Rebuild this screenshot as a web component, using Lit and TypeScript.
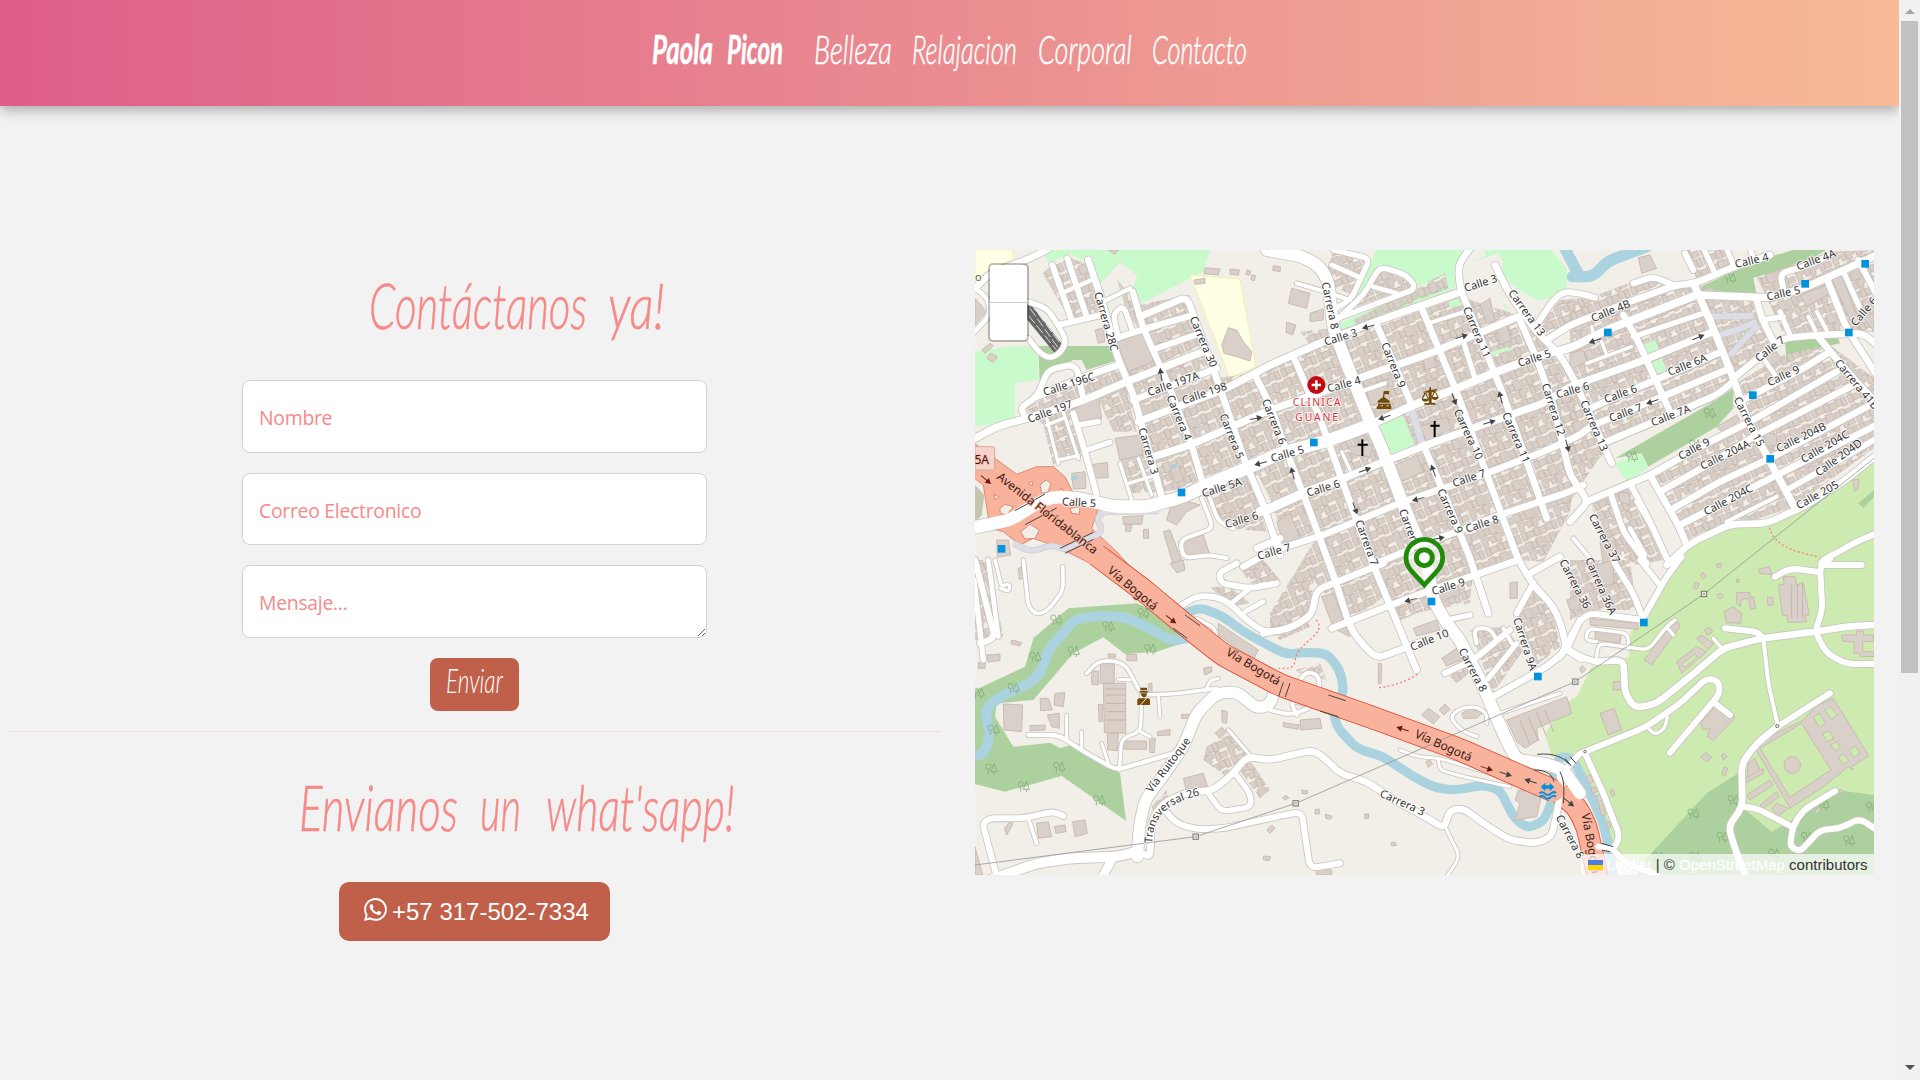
import { LitElement, html, svg, css } from "lit";
import { customElement } from "lit/decorators.js";

/* Map data lives on a grid of six tiles; a letter before a point selects the tile. */
const ORIGIN: Record<string, [number, number]> = {
  A: [0, 0], B: [900, 0], C: [1800, 0], D: [0, 945], E: [900, 945], F: [1800, 945],
};

function points(src: string): [number, number][] {
  let tile = "A";
  return src.trim().split(/\s+/).map((tok) => {
    if (/[A-F]/.test(tok[0])) {
      tile = tok[0];
      tok = tok.slice(1);
    }
    const [x, y] = tok.split(",").map(Number);
    return [x + ORIGIN[tile][0], y + ORIGIN[tile][1]] as [number, number];
  });
}
const poly = (src: string) => points(src).map((p) => p.join(",")).join(" ");

/* Polyline with its corners rounded by quadratic joints. */
function curve(src: string): string {
  const p = points(src);
  let d = `M${p[0]}`;
  for (let i = 1; i < p.length - 1; i++) {
    const [ax, ay] = p[i - 1], [bx, by] = p[i], [cx, cy] = p[i + 1];
    const l1 = Math.hypot(bx - ax, by - ay) || 1, l2 = Math.hypot(cx - bx, cy - by) || 1;
    const r = Math.min(24, l1 / 2, l2 / 2);
    d += `L${bx - ((bx - ax) / l1) * r},${by - ((by - ay) / l1) * r}Q${bx},${by} ${bx + ((cx - bx) / l2) * r},${by + ((cy - by) / l2) * r}`;
  }
  return d + `L${p[p.length - 1]}`;
}

const PARK = [
  "A210,15 720,15 700,80 515,175 482,145 502,92 450,52 385,122 365,60 300,25 240,55",
  "A15,320 110,305 205,303 205,405 135,415 135,525 15,545",
  "B318,15 615,15 560,70 555,130 530,140 525,90 440,125 330,55 275,150 230,190 260,120 305,50",
  "B600,55 650,30 640,15 845,15 890,70 890,130 870,155 800,165 740,130 690,90 700,45 680,25",
  "B325,540 400,512 435,600 360,630", "B208,235 535,95 545,140 215,262", "B535,170 565,160 575,180 540,188",
  "B660,322 715,305 720,315 665,332", "B700,170 715,190 705,198",
  "C215,300 255,285 268,315 230,332", "C240,355 275,340 290,375 255,388", "C135,655 215,625 235,670 170,710",
  "C815,600 912,535 912,550 830,608", "C500,830 550,805 570,825 520,835",
];
const WOOD = [
  "A205,303 425,303 445,345 350,375 335,345 310,345 230,385 210,440",
  "C380,130 480,85 600,35 670,15 770,15 690,60 550,98 560,150 385,142",
  "C135,640 430,470 490,430 490,490 440,545 235,665 215,625",
  "C645,290 800,270 810,295 700,320 650,355", "C830,262 880,235 885,250 850,275",
  "D15,390 165,320 190,235 295,145 500,130 620,180 650,245 560,275 465,282 400,232 310,280 190,420 80,430 75,470 130,560 240,548 270,565 320,550 450,640 468,782 275,648 105,695 15,672",
];
const GRASS = "C912,640 820,710 700,790 590,840 480,845 370,900 305,960 F230,180 182,215 178,290 65,320 20,410 E895,425 825,520 845,590 900,580 F20,600 100,740 130,870 260,945 912,945";
const WOOD_EAST = ["F225,900 410,700 505,640 515,740 605,815 720,750 800,690 912,705 912,945 200,945", "C865,775 912,735 912,755 880,790"];
const YELLOW = ["A660,90 810,102 857,365 780,400", "A15,15 125,15 130,40 60,85 15,125"];
const LAVENDER: [number, string][] = [
  [20, "B422,485 458,602"], [18, "C420,215 550,212"], [18, "C445,272 500,255 560,230"], [18, "C480,332 520,285 565,240"],
  [16, "A130,895 180,920 250,900 280,915 400,860 380,820 400,800 565,798"],
];
const WATER: [number, string][] = [
  [30, "D0,585 40,585 60,530 45,450 90,410 180,370 210,340 240,260 280,220 310,180 370,168 460,170 540,205 600,242 650,235"],
  [28, "D645,160 690,142 760,170 820,215 930,275 E60,282 100,277 170,280 210,330 222,395 190,450 200,500 260,565 340,590 430,650 500,685 560,690 640,675 690,690 730,770 770,805 820,785 845,730 850,640 870,588 900,595 F10,600 60,700 100,790 120,880 130,945"],
  [34, "B875,-10 905,50 930,95 C0,95 70,95 110,50 230,5"],
];
const URBAN = [
  "A218,85 235,70 300,40 360,60 395,205 300,225", "A440,100 500,180 660,150 745,400 895,375 B60,340 190,290 330,240 570,155 760,215 905,400 930,560 900,800 820,950 E740,0 610,30 600,130 480,150 440,160 370,190 340,110 240,190 130,60 120,190 0,215 0,160 B150,860 50,900 0,760 A865,690 A580,740 A510,540 A440,400 A540,300 A470,200",
  "A165,490 330,400 450,370 490,520 500,560 430,560 380,450 320,500 340,630 250,660 220,540",
  "A440,600 540,560 570,740 480,745", "A690,740 840,690 890,860 770,850",
  "B190,15 300,40 245,150 160,110", "B330,70 440,120 260,185", "B250,225 525,85 535,130 260,240", "B90,260 180,250 180,290 120,300",
  "C0,180 200,105 375,120 560,165 600,290 490,420 430,470 120,600 80,650 0,770", "C490,420 640,330 780,300 912,400 912,610 670,785 350,895 235,690 540,530",
  "C350,15 480,15 485,65 380,105", "C560,95 780,20 912,15 912,260 640,265", "B810,235 870,165 930,160 C75,165 0,235 B830,270",
  "C60,760 180,730 280,945 200,960 100,900", "D0,0 55,0 100,230 15,240",
  "E600,210 700,200 760,270 670,400", "E745,170 790,80 850,160 870,260 800,315", "E0,220 110,180 120,200 30,240", "E75,330 150,310 170,360 90,340",
  "F0,0 180,0 200,150 60,150 0,180", "D720,80 780,80 840,130 780,140", "D800,10 880,0 930,60 840,70", "E520,330 600,290 610,330 560,370",
  "D710,560 780,520 830,580 770,650 700,600", "D800,620 840,600 900,690 870,715", "D545,740 590,690 600,740 560,780",
];
const BUILDINGS = [
  "A440,290 525,262 550,350 475,380", "A305,495 385,455 395,520 320,530", "A375,255 400,248 405,290 385,295", "A435,580 510,570 520,630 450,645",
  "A15,160 50,200 15,240", "A755,300 775,248 800,255 820,290 845,320 840,348 800,335 762,325", "A705,68 750,72 745,90 702,86", "A780,72 808,75 806,90 780,88", "A830,75 842,78 840,90 828,88", "A845,90 856,92 854,107 843,104", "A672,105 705,100 705,115 675,118", "A415,15 445,15 435,28",
  "A355,660 412,652 415,698 360,700", "A305,685 345,680 348,730 310,732", "A600,790 640,765 690,780 650,800 620,840 590,825", "A458,815 520,812 515,838 460,838", "A467,838 485,838 482,860 466,858", "A520,853 535,853 536,880 521,880", "A625,890 700,870 720,930 650,945", "A580,860 600,855 640,960 610,960", "A600,665 625,655 640,705 615,715", "A80,885 115,885 122,930 82,937", "A35,315 60,295 70,302 45,325", "A50,340 62,325 82,335 70,352",
  "B65,130 120,145 110,190 55,175", "B50,232 78,240 68,270 48,262", "B10,62 32,65 30,80 8,76", "B120,205 160,192 160,225 120,230", "B450,545 530,515 545,550 470,590", "B235,605 310,600 300,635 250,630", "B355,670 440,630 460,680 380,715", "B290,440 350,415 360,470 300,480", "B20,830 60,805 90,880 40,895", "B460,340 490,330 500,365 465,375", "B470,410 500,400 505,430 465,440", "B680,250 710,240 725,285 690,300", "B630,180 660,160 675,230 650,235",
  "C0,325 40,315 50,350 0,375", "C590,330 620,320 635,345 590,370", "C690,150 780,115 790,140 710,185", "C785,100 815,90 860,210 840,225", "C880,220 912,200 912,260", "C205,38 240,30 260,70 215,85", "C580,560 620,570 620,600 590,605", "C440,545 500,510 510,525 460,565",
  "C90,890 130,870 150,960 100,960", "C848,705 868,703 863,735 853,737", "C145,740 180,745 180,780 150,770",
  "D100,432 158,435 155,515 102,510", "D392,310 433,312 433,370 390,370", "D400,370 467,370 467,520 403,518", "D365,333 385,333 385,375 365,373", "D412,520 445,520 443,572 413,570", "D385,433 397,433 397,485 387,485", "D460,543 530,543 530,568 462,568", "D538,535 556,535 553,578 540,578", "D470,283 500,283 500,302 470,302", "D415,282 436,282 436,292 415,292", "D210,415 235,415 247,450 212,452", "D255,400 285,398 280,440 252,435", "D180,497 225,495 225,510 180,512", "D232,465 268,460 268,505 245,500", "D563,515 600,508 600,525 563,527", "D635,463 662,463 662,475 635,475", "D755,450 772,455 770,490 757,487", "D735,520 755,502 770,515 750,535", "D640,655 700,640 712,680 648,688", "D700,325 725,320 725,335 705,345", "D745,190 865,270 850,300 745,225", "D200,790 235,785 245,830 205,835", "D253,800 285,795 288,815 258,820", "D308,785 345,780 352,820 315,830", "D103,805 125,780 128,795 110,825", "D15,860 38,945 15,945", "D880,888 902,890 898,902 880,900", "D890,810 905,795 915,805 900,820", "D535,372 546,370 546,398 535,398", "D125,240 155,248 150,258 124,252", "D50,285 90,282 90,302 55,306", "D145,25 155,20 162,55 148,58", "D600,10 640,0 645,30 620,38", "D25,308 47,308 45,325 25,325",
  "E455,465 475,445 510,470 490,492", "E507,450 525,432 540,448 522,465", "E90,480 150,475 155,505 92,510", "E40,488 88,495 85,508 40,500", "E745,690 815,705 800,770 735,780 750,730 735,720", "E515,295 560,265 575,300 530,318", "E430,205 500,180 510,210 440,228", "E155,110 190,100 240,230 190,205", "E325,310 335,312 333,370 325,370", "E720,68 742,65 742,115 720,115", "E135,748 148,748 148,762 135,762", "E165,762 186,768 182,778 168,775", "E284,762 296,762 296,776 284,776", "E95,690 113,692 112,702 96,700", "E38,712 50,706 56,714 44,720", "E363,848 375,846 380,856 366,858", "E468,605 480,600 488,612 475,622", "E140,928 185,930 185,945 140,945", "E575,460 600,448 640,455 620,475 580,475", "E890,120 930,105 930,150 900,150", "E500,100 560,75 570,105 510,122",
  "E710,480 890,410 905,460 800,505 805,540 765,565 740,545",
  "F75,205 155,218 150,250 75,240", "F60,175 205,190 202,208 60,195", "F90,460 133,445 155,510 115,525", "F390,490 435,440 495,472 430,542 412,530 420,505 400,510", "F392,590 408,578 425,592 412,606", "F455,585 463,580 472,590 460,600", "F462,622 473,625 465,648 455,642", "F565,28 598,20 608,45 570,40", "F640,50 675,50 680,75 700,68 718,165 705,165 710,185 655,188 650,165 638,168 625,75 642,72", "F500,98 540,98 540,112 552,112 556,145 542,148 535,115 515,118 510,140 500,130", "F462,155 490,140 515,160 512,190 470,188", "F592,112 608,112 610,136 594,136", "F815,225 860,225 860,212 880,214 882,225 912,225 912,245 878,245 878,275 912,275 912,290 870,290 868,280 852,280 852,247 817,243", "F320,305 380,260 410,275 335,340", "F380,235 395,225 430,250 415,270", "F222,300 300,200 325,185 330,200 245,315", "F130,365 155,365 155,390 130,390", "F60,20 130,0 130,75 95,75", "F403,210 418,202 428,215 412,225", "F440,12 452,10 455,20 442,24", "F390,45 400,38 408,48 398,58", "F370,82 378,66 388,72 380,88", "F440,105 452,100 462,110 450,117", "F28,325 38,318 48,328 36,340", "F120,692 130,688 135,705 124,710",
  "F535,610 555,595 572,635 530,660", "F525,655 580,625 580,640 530,668", "F530,705 600,660 610,675 540,720", "F570,735 620,695 628,710 580,745", "F605,745 620,730 655,745 625,770",
  "F733,755 753,738 757,745 740,763", "F805,693 815,688 820,695 810,703", "F48,650 62,643 70,665 55,670", "F62,685 75,680 82,695 68,702", "F78,708 90,704 96,722 84,728", "F86,735 98,728 107,765 95,768", "F108,788 120,785 122,803 112,803", "F500,57 507,57 507,67 500,67",
];
const POOL = ["A603,662 620,657 620,668 605,673", "A302,695 322,692 324,703 304,706", "C903,285 912,280 912,295"];

const ROADS: [number, string][] = [
  [20, "A15,130 60,85 180,40 235,12"], [14, "A15,130 55,160 60,210 12,262"], [16, "A175,170 230,190 265,240 290,290 270,325 240,340 210,325 175,280"],
  [18, "A265,240 385,212"], [18, "A247,60 305,225"], [18, "A292,40 350,215"], [20, "A355,45 400,180 440,330 490,450 515,540 575,755"], [13, "A285,140 365,105"], [13, "A400,170 480,130"],
  [19, "A488,140 520,250 600,430 665,600 700,720"], [16, "A445,280 430,205 460,182 485,250"], [19, "A435,280 530,250 670,210"], [20, "A510,215 650,155 740,400 825,650 880,780 930,930"], [18, "A560,310 690,265"],
  [20, "A490,465 740,370"], [22, "A505,530 770,430 855,385 B0,360 160,290 330,225 560,145"], [22, "A0,588 80,545 170,520 330,470 470,410 700,320"], [18, "A170,520 150,490 200,455 235,375 300,360 320,370 340,460"], [20, "A200,455 330,400 445,360"],
  [10, "A230,520 265,655"], [10, "A280,500 325,640"], [10, "A265,645 325,632"], [10, "A230,540 280,520"], [18, "A310,505 345,620 380,750"], [16, "A325,540 385,530"], [16, "A350,615 420,592"],
  [22, "A550,635 660,600 B0,495 160,440 280,395 480,325 745,215"], [10, "A450,655 485,765"], [10, "A505,640 545,750"], [10, "A475,715 560,690"], [12, "A695,760 730,850 630,885 640,940 720,930 770,940"], [12, "A720,760 745,830 790,850"], [20, "A860,910 930,880"], [10, "A890,810 930,900"],
  [38, "A0,850 120,825 200,775 250,755 330,760 430,785 530,785 640,755 720,715 830,670 B30,625 180,585 300,540"], [24, "B300,540 430,480 550,435 680,380 830,325 C0,310 110,255 380,150"], [28, "A870,800 B0,790 100,745 220,700"], [22, "B220,700 330,655 470,600 650,535 820,475 C0,425 210,350 430,260"],
  [20, "A820,965 B0,920 160,870 400,770 550,720 650,685 820,620 930,570 C60,545 240,470 480,370"], [20, "C50,495 150,450 455,320"], [20, "C110,590 300,510 440,450 490,410"], [20, "B320,955 440,905 560,860 690,810 900,740 C40,720"],
  [36, "B-10,15 100,35 150,65 175,110 190,250 220,330 300,530 340,620 400,780 470,950 E490,120 530,190 570,240 640,380 670,450 700,520 740,600 830,612 880,630 930,700"],
  [20, "B75,345 150,520 250,800 310,960 E440,330"], [20, "A855,390 900,480 B50,620 120,800 190,990 E240,200 270,245 320,295 470,240"], [20, "B320,240 370,350 425,480"], [20, "B460,600 520,740 600,940 E655,160"], [20, "B455,190 560,440 640,660 745,945 E790,75 850,140 875,200 890,270 830,320 670,410"], [16, "B580,290 615,400"],
  [20, "B600,10 565,60 570,130 640,300 700,450 760,620 830,820"], [20, "B675,60 720,150 800,260 870,330 910,400 C60,510 125,655"], [20, "B745,215 800,340 850,480 C0,690 55,770 0,830"],
  [15, "B185,60 265,95"], [16, "B190,15 300,40 245,160 190,195"], [12, "B80,115 150,135 240,165"], [16, "B200,225 280,150 330,65 410,90 440,130 190,225"], [14, "B310,125 380,145"], [12, "B475,235 600,195"], [12, "B285,435 345,415"], [10, "B215,620 240,675"],
  [18, "B800,240 850,165 880,140 930,145 C75,158"], [20, "B830,285 C0,240 180,170 320,120 375,115 480,70 600,30"], [18, "B870,315 C0,305"], [18, "C190,115 250,95 310,120"], [18, "C345,25 370,75"], [16, "C400,10 435,85"], [16, "C470,10 490,60"], [16, "C540,10 550,40"],
  [22, "C375,125 430,250 490,400 530,520 600,650 670,780"], [22, "C385,150 600,158 700,130 800,85 920,30"], [20, "C560,165 575,220 610,290"], [16, "C630,200 660,270"], [18, "C640,130 630,85 720,60 780,30"], [16, "C575,225 640,215"],
  [20, "C490,400 570,335 640,280 740,270 880,265 920,300"], [20, "C770,100 830,250 920,390"], [16, "C820,80 870,190"], [18, "C865,45 920,150"], [20, "C740,270 790,330 850,400 920,475"], [12, "C740,200 770,255"], [12, "C715,215 735,255"], [14, "C580,340 615,390"],
  [20, "C240,690 400,600 540,530 800,380"], [20, "C500,475 700,370 780,320"], [20, "C270,740 430,650 560,570 850,420"], [20, "C310,790 450,710 600,640 920,470"], [20, "C330,840 620,690 920,540"], [18, "C650,735 800,650 920,580"], [20, "C290,960 360,895 480,838 590,835 700,785 820,710 920,630"],
  [20, "C240,690 330,850 350,900"], [20, "C50,770 180,715 240,690"], [18, "C120,740 160,860 230,955"], [18, "C180,715 240,830 290,940"], [12, "C470,830 620,755"], [20, "C160,210 200,280 300,500"], [10, "C50,355 185,305"], [10, "C95,290 110,330"], [10, "C65,245 75,290"], [16, "C190,275 400,205"], [12, "C10,880 60,940 F60,0"], [14, "C200,770 260,870"], [14, "C180,850 225,930"],
  [18, "D15,0 75,235 30,250"], [16, "D12,60 40,300"], [14, "D55,0 85,230"], [10, "D75,0 95,80 120,70 118,95 92,85"], [11, "D160,0 175,140 200,165 235,150 280,90 278,20"], [11, "D350,340 385,303 440,303 470,320 515,405 610,402 740,385"], [9, "D445,358 480,360"], [9, "D565,405 570,470"], [10, "D515,405 512,515 455,535 448,630"], [10, "D512,515 540,530"], [9, "D710,385 720,362 745,355"],
  [13, "D175,525 265,525 350,580 440,630 610,580"], [9, "D290,465 290,540"], [9, "D335,515 335,565"], [9, "D395,550 415,610"],
  [34, "D502,890 508,800 525,720 570,660 640,560 680,460 740,400 800,395 860,445 900,435 915,390"], [30, "D60,960 200,910 300,895 440,890 500,875"], [26, "D395,955 430,890"], [18, "D80,950 38,790 60,775 160,775 250,755 280,768"], [11, "D175,775 200,850"],
  [20, "D515,880 540,890 545,780 580,730 640,700 730,690 790,640 830,590 E0,600 130,570 170,600 210,640 290,665 380,725 430,750 515,800 525,795 540,750 580,745 640,790 720,840 800,850 845,830 865,740 870,650"], [18, "D575,740 620,790 680,808 760,805 930,768 E95,755 120,925 210,910"], [9, "E525,800 570,890 530,950"], [16, "D715,700 755,755 845,740 840,700 795,640"], [10, "D775,510 840,585"],
  [18, "D620,145 680,108 740,110 780,130 830,180 880,215 930,212"], [18, "D800,10 745,40 755,70 840,85 920,70"], [14, "D840,85 790,125"], [14, "D825,155 880,125"], [10, "D680,175 735,205 740,235"],
  [20, "E-20,220 60,205 125,165 140,90 190,70 340,10"], [20, "E185,205 350,140 470,95 745,0"], [14, "E-30,75 20,70"], [16, "E530,180 600,165"], [18, "E525,340 610,300 720,210"], [12, "E620,250 610,205 660,205 680,240"], [16, "E655,355 740,250"], [12, "E700,205 725,250"], [18, "E890,270 930,180"], [18, "E890,270 935,298"], [20, "E780,40 870,-10"], [18, "E740,160 790,70"], [10, "E620,530 570,510 540,470 570,445 620,440 650,460 650,490"], [9, "E390,570 440,590 510,595 660,640"], [9, "E505,600 510,630 580,650 720,680"], [12, "E150,390 145,345 110,335 90,360"], [12, "E0,450 60,465 130,440 60,420 80,465"], [10, "E690,460 870,400"],
  [18, "E885,630 930,580 F45,575 230,500 330,430 410,355 445,362 450,400 300,578"], [18, "F435,430 480,465"], [10, "F235,505 255,525 285,505 292,470"], [18, "F45,580 100,700 150,830 130,870 85,860"], [18, "F130,870 170,910 260,945"],
  [20, "F80,305 160,300 165,400 195,445 260,430 360,350 460,265 575,235 735,215 830,200 910,195"], [18, "F465,205 560,215 580,235"], [12, "F580,235 595,370 622,490"], [10, "F430,235 455,265"], [18, "F615,50 660,25 740,35"], [18, "F780,-5 750,20 757,150 735,215 770,280 830,312 920,312"],
  [18, "F622,500 780,400"], [20, "F622,500 560,550 515,610 517,740 475,800 500,880 530,955"], [18, "F517,740 560,745 665,800"], [18, "F795,693 700,750 668,800 660,860 690,875 750,810 810,805 870,775 920,810"],
  [18, "F-30,290 30,180 60,160 220,180"], [18, "F-10,265 40,295 80,305"], [10, "F80,245 45,240 55,205 175,220 175,265"], [10, "F80,290 85,250 235,270 290,200 315,180"], [10, "F290,200 310,225"], [18, "F220,180 190,100 140,20 130,0"], [18, "F225,165 290,50 335,-10"], [16, "F210,0 270,75"],
  [18, "C875,960 750,960 760,945 860,890 920,865"],
];
const MOTORWAY = "A380,930 A480,1005 D520,90 640,190 760,285 E30,375 300,470 560,565 850,692";
const RAMP = "E870,700 920,740 F50,800 85,960";
const JUNCTION = "A0,585 75,640 140,688 200,665 250,665 285,695 310,745 385,790 365,850 440,920 480,965 380,965 260,905 190,880 150,900 100,860 60,850 40,720 0,690";

const LABELS: [string, string, number][] = [
  ["Carrera 28C", "A408,230", 74], ["Carrera 30", "A700,290", 67], ["Calle 196C", "A297,418", -18], ["Calle 197", "A240,500", -20], ["Calle 197A", "A610,417", -19], ["Calle 198", "A703,445", -19],
  ["Carrera 4", "A627,518", 67], ["Carrera 5", "A785,574", 68], ["Carrera 3", "A535,618", 74], ["Calle 5", "A327,773", 4], ["Calle 5A", "A755,728", -18], ["Calle 6", "A815,825", -16],
  ["Carrera 8", "B180,182", 78], ["Calle 3", "B212,277", -17], ["Calle 3", "B632,115", -18], ["Calle 4", "B222,418", -16], ["Carrera 9", "B370,360", 68], ["Carrera 11", "B620,262", 67], ["Carrera 13", "B770,203", 54], ["Calle 5", "B793,340", -18],
  ["Calle 5", "B52,627", -16], ["Carrera 6", "B12,530", 68], ["Carrera 10", "B595,568", 65], ["Carrera 11", "B738,578", 67], ["Carrera 12", "B850,493", 72], ["Calle 6", "B160,730", -17], ["Calle 7", "B597,700", -19], ["Carrera 9", "B540,798", 66], ["Calle 8", "B636,837", -18], ["Carrera 7", "B290,893", 70], ["Carrera 8", "B422,860", 69], ["Calle 7", "B12,920", -16], ["Calle 6", "B908,436", -16],
  ["Calle 4", "C545,47", -13], ["Calle 4A", "C738,45", -20], ["Calle 4B", "C122,198", -22], ["Calle 5", "C640,145", -12], ["Calle 6", "C882,200", -50], ["Calle 7", "C600,312", -38], ["Calle 6A", "C352,360", -22], ["Calle 9", "C640,393", -25], ["Calle 6", "C152,447", -20], ["Calle 7", "C167,503", -20], ["Calle 7A", "C302,512", -21], ["Carrera 13", "C72,542", 67], ["Carrera 15", "C537,530", 63], ["Carrera 41B", "C860,418", 50], ["Calle 9", "C372,612", -28], ["Calle 204A", "C465,630", -26], ["Calle 204B", "C693,577", -26], ["Calle 204C", "C765,605", -30], ["Calle 204D", "C806,638", -36], ["Calle 204C", "C475,765", -28], ["Calle 205", "C742,750", -29], ["Carrera 37", "C103,880", 62],
  ["Carrera 36A", "F92,78", 66], ["Carrera 36", "F15,72", 62], ["Calle 9", "E535,80", -17], ["Calle 10", "E478,240", -22], ["Carrera 8", "E608,330", 62], ["Carrera 9A", "E765,252", 72], ["Carrera 3", "E397,728", 24], ["Carrera 8", "E900,830", 62], ["Vía Ruitoque", "D595,615", -53],
];
const BIG_LABELS: [string, string, number][] = [
  ["Avenida Floridablanca", "A232,805", 38], ["Vía Bogotá", "D488,85", 40], ["Vía Bogotá", "D850,320", 31], ["Vía Bogotá", "E520,557", 24], ["Vía Bogotá", "F62,850", 80],
];
const STOPS = ["A634,742", "A94,911", "B131,592", "C113,262", "C705,116", "C885,56", "C836,262", "C548,450", "C600,641", "F221,187", "E484,124", "E803,349"];
const ARROWS: [string, number, string][] = [
  ["A573,388", -98, "#444"], ["A858,520", -10, "#444"], ["A872,655", 165, "#444"], ["B295,245", 165, "#444"], ["B575,275", -17, "#444"], ["B552,462", 70, "#444"], ["B692,457", -105, "#444"], ["B343,517", 160, "#444"], ["B658,532", -17, "#444"], ["B68,685", -105, "#444"], ["B285,675", -20, "#444"], ["B490,677", -110, "#444"], ["B445,762", 165, "#444"], ["B255,790", 70, "#444"], ["B892,602", 75, "#444"], ["B505,880", -10, "#444"],
  ["C75,287", 160, "#444"], ["C385,277", -22, "#444"], ["C247,470", 160, "#444"], ["E422,120", 165, "#444"], ["A48,704", 40, "#6b1a10"], ["D603,178", 38, "#6b1a10"], ["E398,507", -162, "#6b1a10"], ["E650,625", 18, "#6b1a10"], ["E707,642", 18, "#444"], ["E782,664", -162, "#444"], ["E897,727", 40, "#444"],
];
const TREES = ["D258,180", "D415,200", "D520,160", "D195,292", "D310,275", "D540,268", "D130,385", "D70,510", "D25,400", "D63,627", "D267,622", "D160,680", "D387,722", "F370,762", "F490,722", "F457,832", "F710,832", "F837,843", "F612,882", "F375,892", "F905,742", "F265,892", "F760,735", "C480,100", "C418,505", "C375,600", "C185,635"];
const TOWERS = ["D677,830", "E77,730", "F16,365", "F402,102"];

const at = (src: string, rest = "") => {
  const [x, y] = points(src)[0];
  return `translate(${x} ${y}) ${rest}`;
};

/* Condensed handwritten-style words, each set to a fixed advance. */
const word = (text: string, width: number, cls: string, height: number, baseline: number) => html`<svg
  class="word ${cls}" width=${width} height=${height} viewBox="0 0 ${width} ${height}">
  <text x="0" y=${baseline} textLength=${width} lengthAdjust="spacingAndGlyphs">${text}</text></svg>`;

@customElement("street-map")
export class StreetMap extends LitElement {
  static styles = css`
    :host { display: block; position: relative; overflow: hidden; background: #f2efe9; }
    .canvas { display: block; width: 100%; height: 100%; }
    .park { fill: #c8facc; } .wood { fill: #add19e; } .grass { fill: #cdebb0; }
    .yellow { fill: #ffffe5; stroke: #f6f0b0; stroke-width: 3; }
    .pool { fill: #aad3df; }
    .building { fill: #d9d0c9; stroke: #c5b5aa; stroke-width: 2.5; }
    .hole { fill: #cdebb0; stroke: #c5b5aa; stroke-width: 2.5; }
    .line { fill: none; stroke-linecap: round; stroke-linejoin: round; }
    .water { stroke: #aad3df; } .plaza { stroke: #dddde8; }
    .casing { stroke: #c9c5c0; } .road { stroke: #fff; }
    .edge { stroke: #dc4a31; } .motorway { stroke: #f9b29c; } .butt { stroke-linecap: butt; }
    .junction { fill: #f9b29c; stroke: #e08a70; stroke-width: 3; }
    .gap { fill: #f2efe9; stroke: #e08a70; stroke-width: 3; }
    .bridge { fill: none; stroke: #444; stroke-width: 3; }
    .roofs { fill: none; stroke: #c5b5aa; stroke-width: 3; }
    .track { fill: none; stroke: #fa8072; stroke-width: 4; stroke-dasharray: 6 7; }
    .power { fill: none; stroke: #999; stroke-width: 2.5; }
    .tower { fill: #f2efe9; stroke: #777; stroke-width: 3; }
    .tree { fill: none; stroke: #83ad78; stroke-width: 2.5; }
    .label { font: 33px "Noto Sans", "Open Sans", sans-serif; fill: #333; stroke: #fff; stroke-opacity: 0.85; stroke-width: 6px; paint-order: stroke; stroke-linejoin: round; text-anchor: middle; }
    .big { font-size: 36px; stroke: #f9b29c; fill: #3a1a14; }
    .clinic { font-size: 31px; fill: #da3040; }
    .shield { fill: #f6d3cb; stroke: #d9a69b; stroke-width: 3; }
    .stop { fill: #0092da; }
    .zoom { position: absolute; left: 13px; top: 13px; width: 37px; height: 75px; border: 2px solid rgba(0, 0, 0, 0.25); border-radius: 5px; background: #fff; background-clip: padding-box; display: flex; flex-direction: column; }
    .zoom span { flex: 1; } .zoom span + span { border-top: 1px solid #ccc; }
    .credit { position: absolute; right: 0; bottom: 0; height: 21px; padding: 0 6.5px; display: flex; align-items: center; background: rgba(255, 255, 255, 0.7); font: 15px "Liberation Sans", Arial, sans-serif; color: #333; white-space: pre; }
    .credit a { color: #fff; }
    .flag { width: 15px; height: 10px; margin-right: 4px; background: linear-gradient(#4c7be1 50%, #ffd500 50%); }
  `;

  render() {
    const line = (cls: string, w: number, src: string) => svg`<path class="line ${cls}" stroke-width=${w} d=${curve(src)} />`;
    const area = (cls: string, src: string) => svg`<polygon class=${cls} points=${poly(src)} />`;
    return html`
      <svg class="canvas" viewBox="15 15 2697 1875" preserveAspectRatio="none">
        <defs>
          <pattern id="lots" width="118" height="92" patternUnits="userSpaceOnUse" patternTransform="rotate(-23)">
            <g class="building">
              <rect x="2" y="3" width="19" height="25" /><rect x="21" y="8" width="16" height="20" /><rect x="37" y="2" width="22" height="29" /><rect x="64" y="6" width="17" height="22" /><rect x="81" y="3" width="14" height="28" /><rect x="98" y="8" width="17" height="19" />
              <path d="M3 33h24v12h-8v14h-16zM31 36h14v20h-14zM47 33h26v14h-11v12h-15zM78 34h15v25h-15zM93 40h21v16h-21z" />
              <rect x="2" y="64" width="15" height="24" /><rect x="17" y="66" width="22" height="19" /><rect x="43" y="63" width="15" height="25" /><rect x="58" y="67" width="19" height="21" /><rect x="81" y="64" width="18" height="20" /><rect x="99" y="63" width="14" height="26" />
            </g>
          </pattern>
        </defs>
        ${area("grass", GRASS)} ${PARK.map((s) => area("park", s))} ${WOOD.map((s) => area("wood", s))}
        ${WOOD_EAST.map((s) => area("wood", s))} ${YELLOW.map((s) => area("yellow", s))}
        ${URBAN.map((s) => svg`<polygon fill="url(#lots)" points=${poly(s)} />`)}
        ${["B325,540 400,512 435,600 360,630", "C215,300 255,285 268,315 230,332", "C240,355 275,340 290,375 255,388", "B535,170 565,160 575,180 540,188", "B660,322 715,305 720,315 665,332"].map((s) => area("park", s))}
        ${WATER.map(([w, s]) => line("water", w, s))}
        ${BUILDINGS.map((s) => area("building", s))} ${POOL.map((s) => area("pool", s))}
        ${area("building", "F550,555 700,480 735,440 790,415 897,588 845,620 850,630 835,620 760,680 660,745")}
        ${["F570,565 695,490 783,630 660,712", "F730,470 748,460 766,490 748,502", "F765,450 780,440 803,465 783,478", "F757,522 775,512 792,535 772,545", "F783,555 800,545 812,563 795,573", "F805,590 822,582 836,602 820,614", "F837,570 855,558 870,580 852,592", "F335,312 375,282 382,290 345,322"].map((s) => area("hole", s))}
        <circle class="building" cx="2467" cy="1560" r="25" />
        <path class="roofs" d="M405 1332h62M405 1350h62M408 1375h60M408 1400h60M408 1425h60M1700 1402l28 70M1675 1415l30 72M1650 1425l30 74M1725 1395l26 66M2465 1020v100M2482 1018v100M2498 1016v100" />
        <path d="M172 165l102 130-16 34-86-105z" fill="#666" />
        <path d="M180 190l84 118M176 212l84 104M182 176l86 116" fill="none" stroke="#ddd" stroke-width="3" stroke-dasharray="30 8" />
        ${TREES.map((s) => svg`<g class="tree" transform=${at(s)}><circle cx="-8" cy="-7" r="8" /><path d="M-8 1v14M9 8v8M9 -16l-9 24h18z" /></g>`)}
        ${ROADS.map(([w, s]) => line("casing", w + 5, s))}
        ${area("junction", JUNCTION)}
        ${line("edge butt", 66, RAMP)} ${line("motorway butt", 61, RAMP)}
        ${["A210,720 228,705 243,715 235,740 215,745", "A90,790 105,778 130,785 110,810 90,805", "A152,860 180,838 208,855 195,880 165,882", "A300,790 330,785 328,808 305,805"].map((s) => svg`<polygon class="gap" stroke-linejoin="round" points=${poly(s)} />`)}
        <path class="gap" d="M175 715l12-6v14zM73 748l14 8-12 8zM276 730v16l-10-10z" />
        <path d="M15 720l28 30-8 60-20 25z" fill="#c6c6ae" />
        ${LAVENDER.map(([w, s]) => line("casing butt", w + 3, s))} ${LAVENDER.map(([w, s]) => line("plaza butt", w, s))}
        ${ROADS.map(([w, s]) => line("road", w, s))}
        ${line("edge butt", 70, MOTORWAY)} ${line("motorway", 65, MOTORWAY)}
        <circle class="tower" cx="1845" cy="1520" r="4" /><circle class="tower" cx="2422" cy="1443" r="5" />
        <path class="bridge" d="M135 797l90-50M165 839l95-50M270 910l100-48M285 925l85-42M1702 1528c50-5 80 10 95 30M1692 1575c40 0 55 15 60 35M1770 1580c15 30 12 60 10 95M1075 1350l52 17M1050 1398l55 17M645 1110l45 32M610 1150l42 30M1785 1540l18 22M1800 1535l18 20M1895 1795l35 10M1895 1815l25 5M940 1312l-14 42M960 1314l-14 42" />
        <path class="track" d="M1038 1125c40 40-60 70-62 120-5 30-25 25-50 25M1342 1288c-30 20-70 35-115 40M2398 848c15 50 60 70 150 88" />
        <polyline class="power" points=${poly("D15,915 D677,830 E77,730 F16,365 F402,102 C912,640")} />
        ${TOWERS.map((s) => svg`<g transform=${at(s)}><rect class="tower" x="-8" y="-8" width="16" height="16" /><path class="power" d="M-4 -4l8 8M4 -4l-8 8" /></g>`)}
        ${ARROWS.map(([s, r, c]) => svg`<path transform=${at(s, `rotate(${r})`)} d="M-19 -1.5h22v-8l17 9.500-17 9.500v-8h-22z" fill=${c} />`)}
        ${LABELS.map(([t, s, r]) => svg`<text class="label" transform=${at(s, `rotate(${r})`)} y="11">${t}</text>`)}
        ${BIG_LABELS.map(([t, s, r]) => svg`<text class="label big" transform=${at(s, `rotate(${r})`)} y="12">${t}</text>`)}
        <path id="transversal" fill="none" d="M547 1790C550 1720 580 1680 685 1652" />
        <text class="label"><textPath href="#transversal" startOffset="50%">Transversal 26</textPath></text>
        <path class="shield" d="M15 605h53q6 0 6 6v58q0 6-6 6h-53z" />
        <text class="label big" x="35" y="657" stroke-width="0">5A</text>
        <text class="label" x="25" y="108" style="fill:#6b6b20">o</text>
        ${STOPS.map((s) => svg`<rect class="stop" transform=${at(s)} x="-11" y="-11" width="23" height="23" />`)}
        <circle cx="1039" cy="420" r="27" fill="#c20a12" /><path d="M1039 406v28M1025 420h28" stroke="#fff" stroke-width="7" />
        <text class="label clinic" x="1040" y="484" textLength="144">CLINICA</text><text class="label clinic" x="1040" y="529" textLength="128">GUANE</text>
        <g fill="#734a08">
          <path d="M1241 438h16v10h-14v8l16 12v5h-36v-5l16-12zM1224 476h38v10h-5v-5h-8v5h-10v-5h-8v5h-7zM1220 484h44v8h-44z" />
          <path d="M1378 427h5v8l18-3v4l-16 5v33h12v5h-34v-5h13v-32l-15 3v-4l17-6zM1355 462l9-20h3l10 20q-2 8-11 8t-11-8zm4-1h14l-7-15zM1384 457l9-20h3l10 20q-2 8-11 8t-11-8zm4-1h14l-7-15z" fill-rule="evenodd" />
          <path d="M511 1328h20v7h-20zM509 1337h24v6h-24zM512 1345h19q-1 12-9 12t-10-12zM502 1365q0-5 6-5h26q6 0 6 5v15h-38z" /><path d="M538 1350l-30 34" stroke="#f2efe9" stroke-width="3" />
        </g>
        <path d="M1394 528v48M1381 542h28M1177 583v50M1163 599h30" stroke="#000" stroke-width="6" />
        <path d="M1712 1626l14-13v8h13v-8l14 13-14 13v-8h-13v8z" fill="#0092da" />
        <path d="M1708 1645q9-7 17 1t17 0 16-2M1708 1656q9-7 17 1t17 0 16-2" fill="none" stroke="#0092da" stroke-width="6" />
        <path d="M1363 1020c-30-35-55-50-55-82a55 55 0 0 1 110 0c0 32-25 47-55 82z" fill="#fff" fill-opacity=".55" stroke="#1f8b08" stroke-width="14" />
        <circle cx="1363" cy="938" r="24" fill="#fff" stroke="#1f8b08" stroke-width="15" />
      </svg>
      <div class="zoom"><span></span><span></span></div>
      <div class="credit"><span class="flag"></span><a>Leaflet</a><span> | © </span><a>OpenStreetMap</a><span> contributors</span></div>
    `;
  }
}

@customElement("app-root")
export class AppRoot extends LitElement {
  static styles = css`
    :host { display: grid; grid-template-columns: 1899px 21px; width: 1920px; height: 1080px; overflow: hidden; background: #f2f2f2; }
    .page { display: flex; flex-direction: column; overflow: hidden; }
    .bar { display: flex; justify-content: center; height: 106px; flex: none; background: linear-gradient(to right, #dd5e89, #f7bb97); box-shadow: 0 4px 12px rgba(0, 0, 0, 0.3); }
    .links { display: flex; gap: 20.5px; margin-left: 31px; }
    .brand { display: flex; gap: 14px; }
    .word { display: block; overflow: visible; font-family: Lato, "Open Sans", sans-serif; font-style: italic; font-weight: 300; }
    .nav { font-size: 40px; fill: #fff; stroke: #fff; stroke-width: 0.5px; }
    .bold { font-weight: 700; }
    .title { font-size: 64px; fill: #f58a88; stroke: #f58a88; stroke-width: 0.6px; }
    .send { font-size: 33px; fill: #fff; }
    .content { display: grid; grid-template-columns: 931px 899px; column-gap: 35px; padding: 144px 0 0 9px; }
    .contact { display: flex; flex-direction: column; align-items: center; padding-top: 10px; }
    .heading { display: flex; margin: 0; padding-left: 84px; height: 100px; }
    .form { display: flex; flex-direction: column; align-items: center; width: 465px; gap: 20px; margin-top: 20px; }
    .field { box-sizing: border-box; display: block; width: 100%; height: 72.7px; margin: 0; padding: 2px 16px 0; border: 1px solid #ced4da; border-radius: 8px; background: #fff; font: 19.4px "Open Sans", "Noto Sans", sans-serif; letter-spacing: -0.28px; outline: none; }
    .field::placeholder { color: #f58a88; opacity: 1; }
    .area { padding-top: 23px; resize: both; overflow: hidden; }
    .submit { display: flex; justify-content: center; width: 89px; height: 53px; padding: 0; border: 0; border-radius: 8px; background: #c05f4a; }
    .rule { width: 100%; height: 1px; margin: 20px 0 29px; border: 0; background: #f0dcdb; }
    .phone { display: flex; align-items: center; box-sizing: border-box; width: 271px; height: 59px; margin-top: 21px; padding: 0 0 0 25px; border: 0; border-radius: 10px; background: #c05f4a; color: #fff; font: 24px "Liberation Sans", Arial, sans-serif; white-space: nowrap; }
    .phone svg { width: 23px; height: 23px; margin: 0 5px 4px 0; fill: #fff; }
    .map { width: 899px; height: 625px; }
    .scroll { display: flex; flex-direction: column; align-items: center; background: #f1f1f1; padding: 9px 2px 10px 2px; justify-content: space-between; }
    .thumb { width: 17px; height: 652px; background: #c1c1c1; margin-top: 7px; margin-bottom: auto; }
    .up { border: 5px solid transparent; border-top: 0; border-bottom-color: #a3a3a3; }
    .down { border: 5px solid transparent; border-bottom: 0; border-top-color: #505050; }
  `;

  render() {
    return html`
      <div class="page">
        <nav class="bar">
          <div class="brand">${word("Paola", 61, "nav bold", 106, 64)}${word("Picon", 56, "nav bold", 106, 64)}</div>
          <div class="links">
            ${word("Belleza", 78, "nav", 106, 64)}${word("Relajacion", 105, "nav", 106, 64)}${word("Corporal", 94, "nav", 106, 64)}${word("Contacto", 95, "nav", 106, 64)}
          </div>
        </nav>
        <main class="content">
          <section class="contact">
            <h1 class="heading">${word("Contáctanos", 218, "title", 100, 68.5)}<span style="width:21px"></span>${word("ya!", 57, "title", 100, 68.5)}</h1>
            <div class="form">
              <input class="field" placeholder="Nombre" />
              <input class="field" placeholder="Correo Electronico" />
              <textarea class="field area" placeholder="Mensaje..."></textarea>
              <button class="submit">${word("Enviar", 57, "send", 53, 35)}</button>
            </div>
            <hr class="rule" />
            <h1 class="heading">${word("Envianos", 159, "title", 100, 69.5)}<span style="width:22px"></span>${word("un", 41, "title", 100, 69.5)}<span style="width:25px"></span>${word("what'sapp!", 189, "title", 100, 69.5)}</h1>
            <button class="phone">
              <svg viewBox="0 0 16 16"><path d="M13.601 2.326A7.854 7.854 0 0 0 7.994 0C3.627 0 .068 3.558.064 7.926c0 1.399.366 2.760 1.057 3.965L0 16l4.204-1.102a7.933 7.933 0 0 0 3.790.965h.004c4.368 0 7.926-3.558 7.930-7.930A7.898 7.898 0 0 0 13.600 2.326zM7.994 14.521a6.573 6.573 0 0 1-3.356-.920l-.240-.144-2.494.654.666-2.433-.156-.251a6.560 6.560 0 0 1-1.007-3.505c0-3.626 2.957-6.584 6.591-6.584a6.560 6.560 0 0 1 4.660 1.931 6.557 6.557 0 0 1 1.928 4.660c-.004 3.639-2.961 6.592-6.592 6.592zm3.615-4.934c-.197-.099-1.170-.578-1.353-.646-.182-.065-.315-.099-.445.099-.133.197-.513.646-.627.775-.114.133-.232.148-.430.050-.197-.100-.836-.308-1.592-.985-.590-.525-.985-1.175-1.103-1.372-.114-.198-.011-.304.088-.403.087-.088.197-.232.296-.346.100-.114.133-.198.198-.330.065-.134.034-.248-.015-.347-.050-.099-.445-1.076-.612-1.470-.160-.389-.323-.335-.445-.340-.114-.007-.247-.007-.380-.007a.729.729 0 0 0-.529.247c-.182.198-.691.677-.691 1.654 0 .977.710 1.916.810 2.049.098.133 1.394 2.132 3.383 2.992.470.205.840.326 1.129.418.475.152.904.129 1.246.080.380-.058 1.171-.480 1.338-.943.164-.464.164-.860.114-.943-.049-.084-.182-.133-.380-.232z" /></svg>
              <span>+57 317-502-7334</span>
            </button>
          </section>
          <street-map class="map"></street-map>
        </main>
      </div>
      <div class="scroll"><div class="up"></div><div class="thumb"></div><div class="down"></div></div>
    `;
  }
}
